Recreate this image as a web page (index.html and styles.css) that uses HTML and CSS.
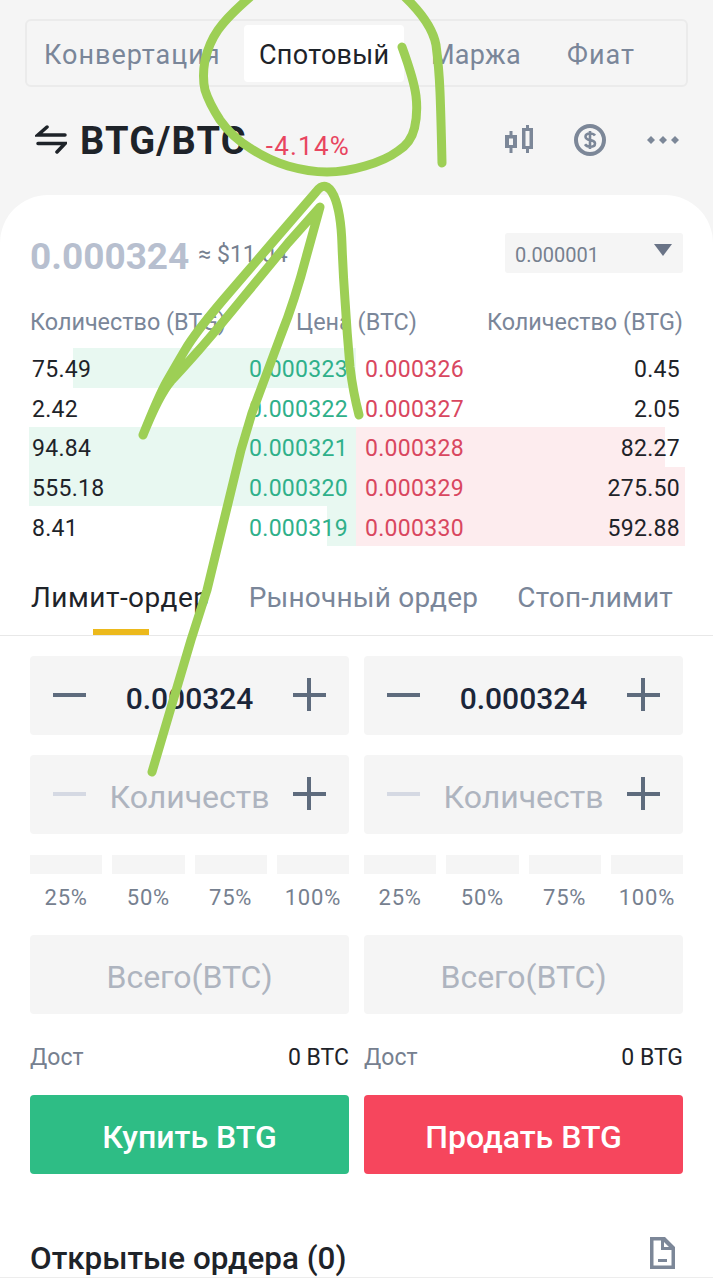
FILE: index.html

```html
<!DOCTYPE html>
<html lang="ru">
<head>
<meta charset="UTF-8" />
<meta name="viewport" content="width=device-width, initial-scale=1" />
<title>BTG/BTC</title>
<link rel="stylesheet" href="styles.css">
</head>
<body>
  <main class="screen">
    <header class="top">
      <nav class="modes">
        <span class="mode convert">Конвертация</span>
        <span class="mode active">Спотовый</span>
        <span class="mode margin">Маржа</span>
        <span class="mode fiat-mode">Фиат</span>
      </nav>
      <div class="ticker">
        <svg class="swap" width="32" height="32" viewBox="0 0 32 32" fill="none" stroke="#1e2329" stroke-width="3.500" stroke-linecap="round">
          <path d="M30 11H3l9-8" />
          <path d="M3 19.500h27l-8 8.500" />
        </svg>
        <span class="pair">BTG/BTC</span>
        <span class="change">-4.14%</span>
        <div class="ticker-icons">
          <svg class="candles" width="30" height="30" viewBox="0 0 30 30" fill="#7c8798">
            <path fill-rule="evenodd" d="M4.500 6h3v4H12v13H7.500v5h-3v-5H0V10h4.500zM4 13.500V20h4v-6.500z" />
            <path fill-rule="evenodd" d="M21 0h3v3h4v21h-4v4h-3v-4h-4V3h4zM20.500 6v15h4V6z" />
          </svg>
          <svg width="32" height="32" viewBox="0 0 32 32" fill="none" stroke="#7c8798">
            <circle cx="16" cy="16" r="14" stroke-width="4" />
            <path d="M21 11.500c-1-1.500-3-2-5-2-2.500 0-4.500 1.200-4.500 3.300 0 4.700 9.500 2 9.500 6.600 0 2.200-2.200 3.300-5 3.300-2.200 0-4-.8-5-2.400M16 7v18" stroke-width="2.600" />
          </svg>
          <svg width="34" height="10" viewBox="0 0 34 10" fill="#7c8798">
            <path d="M5 1l4 4-4 4-4-4zM17 1l4 4-4 4-4-4zM29 1l4 4-4 4-4-4z" />
          </svg>
        </div>
      </div>
    </header>

    <section class="sheet">
      <div class="price-row">
        <span class="last-price">0.000324</span>
        <span class="fiat">≈ $11.04</span>
        <div class="step-select">
          <span>0.000001</span>
          <i class="caret"></i>
        </div>
      </div>

      <div class="book-head">
        <span>Количество (BTG)</span>
        <span>Цена (BTC)</span>
        <span>Количество (BTG)</span>
      </div>
      <div class="book">
        <div class="bid" style="background-size:86.500% 100%"><span>75.49</span><span class="up">0.000323</span></div>
        <div class="ask"><span class="down">0.000326</span><span>0.45</span></div>
        <div class="bid"><span>2.42</span><span class="up">0.000322</span></div>
        <div class="ask"><span class="down">0.000327</span><span>2.05</span></div>
        <div class="bid" style="background-size:100% 100%"><span>94.84</span><span class="up">0.000321</span></div>
        <div class="ask" style="background-size:94% 100%"><span class="down">0.000328</span><span>82.27</span></div>
        <div class="bid" style="background-size:100% 100%"><span>555.18</span><span class="up">0.000320</span></div>
        <div class="ask" style="background-size:100% 100%"><span class="down">0.000329</span><span>275.50</span></div>
        <div class="bid" style="background-size:9% 100%"><span>8.41</span><span class="up">0.000319</span></div>
        <div class="ask" style="background-size:100% 100%"><span class="down">0.000330</span><span>592.88</span></div>
      </div>

      <div class="order-tabs">
        <span class="order-tab current">Лимит-ордер</span>
        <span class="order-tab">Рыночный ордер</span>
        <span class="order-tab">Стоп-лимит</span>
      </div>

      <div class="forms">
        <form class="trade">
          <div class="stepper"><i class="minus"></i><b class="value">0.000324</b><i class="plus"></i></div>
          <div class="stepper"><i class="minus faded"></i><span class="hint">Количеств</span><i class="plus"></i></div>
          <div class="percents">
            <div class="pct"><i></i><span>25%</span></div>
            <div class="pct"><i></i><span>50%</span></div>
            <div class="pct"><i></i><span>75%</span></div>
            <div class="pct"><i></i><span>100%</span></div>
          </div>
          <div class="total">Всего(BTC)</div>
          <div class="avail"><span class="avail-label">Дост</span><span>0 BTC</span></div>
          <button type="button" class="action buy"><span>Купить BTG</span></button>
        </form>
        <form class="trade">
          <div class="stepper"><i class="minus"></i><b class="value">0.000324</b><i class="plus"></i></div>
          <div class="stepper"><i class="minus faded"></i><span class="hint">Количеств</span><i class="plus"></i></div>
          <div class="percents">
            <div class="pct"><i></i><span>25%</span></div>
            <div class="pct"><i></i><span>50%</span></div>
            <div class="pct"><i></i><span>75%</span></div>
            <div class="pct"><i></i><span>100%</span></div>
          </div>
          <div class="total">Всего(BTC)</div>
          <div class="avail"><span class="avail-label">Дост</span><span>0 BTG</span></div>
          <button type="button" class="action sell"><span>Продать BTG</span></button>
        </form>
      </div>

      <div class="open-orders">
        <h2>Открытые ордера (0)</h2>
        <svg width="25" height="32" viewBox="0 0 25 32" fill="#7c8798">
          <path fill-rule="evenodd" d="M0 0h15l10 10v22H0zM3.500 3.500v25h18V13H11V3.500zM14 5v5h5zM8 22h9v3H8z" />
        </svg>
      </div>
    </section>

    <!-- пометка от руки поверх скриншота -->
    <svg class="scribble" width="713" height="1280" viewBox="0 0 713 1280" fill="none" stroke="#9dcf55" stroke-width="9" stroke-linecap="round" stroke-linejoin="round">
      <path d="M402 47Q414 80 416 96Q418 113 414.500 128Q411 143 398 151Q386 160 365 166Q345 172 327 172Q309 172 288 166Q268 160 250 148Q232 137 220 120Q209 103 205 90Q202 77 205 60Q209 43 218 30Q227 17 250 -3" />
      <path d="M405 -3Q432 23 436 45Q439 67 440 92Q441 117 442 163" />
      <path d="M152 772L191 640L207 590L241 450L252 413Q268 370 281 335Q295 300 307 254L320 207L288 243L241 300Q214 333 199 350Q184 367 171 381Q159 395 143 435Q159 395 167 381Q175 367 185 350Q195 333 223 300L272 243L316 192Q326 179 334 196Q341 212 342 245Q343 272 345 300Q347 333 350 367Q353 392 359 415" />
    </svg>
  </main>
</body>
</html>
```

FILE: styles.css

```css
* {
  box-sizing: border-box;
}
body {
  margin: 0;
  background: #f5f5f5;
  color: #1e2329;
  font-family: Roboto, "Noto Sans", sans-serif;
}
.screen {
  position: relative;
  width: 713px;
  height: 1280px;
  overflow: hidden;
}
.top {
  height: 195px;
  padding: 19px 25px 0;
}
.modes {
  display: flex;
  align-items: center;
  height: 68px;
  padding: 0 2px;
  border: 2px solid #ebebeb;
  border-radius: 6px;
  font-size: 27px;
  letter-spacing: 0.300px;
  color: #7a8699;
}
.mode {
  padding: 3px 15px 0;
  line-height: 54px;
  border-radius: 4px;
}
.mode.convert {
  width: 215px;
  letter-spacing: 1px;
  white-space: nowrap;
}
.mode.active {
  width: 160px;
  background: #fff;
  color: #1e2329;
  text-align: center;
}
.mode.margin {
  margin-left: 12px;
}
.mode.fiat-mode {
  margin-left: 16px;
  letter-spacing: 1px;
}
.ticker {
  display: flex;
  align-items: center;
  height: 66px;
  margin-top: 20px;
  padding-left: 10px;
}
.swap {
  flex: none;
}
.pair {
  margin: 1px 0 0 13px;
  font-size: 38px;
  font-weight: 700;
  letter-spacing: 1.200px;
}
.change {
  margin: 12px 0 0 19px;
  font-size: 26px;
  letter-spacing: 1.200px;
  color: #e8455f;
}
.ticker-icons {
  display: flex;
  align-items: center;
  gap: 40px;
  margin-left: auto;
  padding-right: 8px;
}
.candles {
  margin-right: -1px;
}
.sheet {
  height: 1085px;
  padding-top: 38px;
  background: #fff;
  border-radius: 48px 48px 0 0;
}
.price-row {
  display: flex;
  align-items: center;
  height: 40px;
  padding: 0 30px;
}
.last-price {
  padding-top: 6px;
  font-size: 37px;
  font-weight: 700;
  color: #b7bfcf;
}
.fiat {
  margin-left: 9px;
  padding-top: 3px;
  font-size: 23px;
  color: #76808f;
}
.step-select {
  display: flex;
  align-items: center;
  justify-content: space-between;
  width: 178px;
  height: 40px;
  margin-left: auto;
  padding: 0 11px 0 10px;
  background: #f5f5f5;
  border-radius: 3px;
  font-size: 20px;
  color: #76808f;
}
.step-select span {
  padding-top: 3px;
}
.caret {
  margin-bottom: 6px;
  border-top: 12px solid #6a7487;
  border-left: 9px solid transparent;
  border-right: 9px solid transparent;
}
.book-head {
  display: flex;
  justify-content: space-between;
  margin-top: 34px;
  padding: 0 30px;
  font-size: 23.400px;
  line-height: 30px;
  color: #7a8699;
}
.book {
  display: grid;
  grid-template-columns: 327px 329px;
  grid-auto-rows: 39.600px;
  margin: 11px 0 0 29px;
  font-size: 23px;
  letter-spacing: 0.300px;
  color: #1e2329;
}
.bid, .ask {
  display: flex;
  align-items: center;
  justify-content: space-between;
  padding-top: 4px;
  background-repeat: no-repeat;
  background-size: 0 100%;
}
.bid {
  padding-left: 3px;
  padding-right: 8px;
  background-image: linear-gradient(#e8f8f1, #e8f8f1);
  background-position: right top;
}
.ask {
  padding-left: 9px;
  padding-right: 5px;
  background-image: linear-gradient(#fdecee, #fdecee);
  background-position: left top;
}
.up {
  color: #2fb08a;
}
.down {
  color: #d9475f;
}
.order-tabs {
  display: flex;
  justify-content: space-between;
  height: 90px;
  padding: 34px 40px 0 31px;
  border-bottom: 1px solid #e8e8e8;
  font-size: 28px;
  letter-spacing: 0.200px;
  color: #7a8699;
}
.order-tab {
  position: relative;
  line-height: 36px;
}
.order-tab.current {
  letter-spacing: 0.500px;
  color: #1e2329;
}
.order-tab.current::after {
  content: "";
  position: absolute;
  left: 62px;
  bottom: 0;
  width: 56px;
  height: 6px;
  background: #ecb91c;
}
.forms {
  display: grid;
  grid-template-columns: 319px 319px;
  gap: 15px;
  padding: 20px 0 0 30px;
}
.trade {
  display: flex;
  flex-direction: column;
}
.stepper {
  display: flex;
  align-items: center;
  justify-content: space-between;
  height: 79px;
  margin-bottom: 20px;
  padding: 0 23px;
  background: #f5f5f5;
  border-radius: 4px;
  font-size: 30px;
}
.minus, .plus {
  position: relative;
  flex: none;
  width: 33px;
  height: 4px;
  background: #5e6b7d;
}
.minus.faded {
  background: #d5d9e3;
}
.plus::after {
  content: "";
  position: absolute;
  left: 14.500px;
  top: -15px;
  width: 4px;
  height: 33px;
  background: #5e6b7d;
}
.value {
  padding-top: 6px;
  font-weight: 500;
  color: #1b2639;
}
.hint, .total {
  color: #aeb4bf;
}
.hint {
  padding-top: 6px;
  font-size: 32px;
}
.percents {
  display: grid;
  grid-template-columns: repeat(4, 1fr);
  gap: 10px;
  margin-top: 1px;
}
.pct {
  display: flex;
  flex-direction: column;
  align-items: center;
  font-size: 22px;
  letter-spacing: 0.800px;
  color: #76808f;
}
.pct i {
  width: 100%;
  height: 19px;
  background: #f5f5f5;
}
.pct span {
  margin-top: 9px;
  line-height: 30px;
}
.total {
  display: flex;
  align-items: center;
  justify-content: center;
  height: 79px;
  margin-top: 22px;
  padding-top: 5px;
  background: #f5f5f5;
  border-radius: 4px;
  font-size: 32px;
}
.avail {
  display: flex;
  justify-content: space-between;
  margin-top: 29px;
  font-size: 23px;
  line-height: 30px;
}
.avail-label {
  color: #76808f;
}
.action {
  height: 79px;
  margin-top: 22px;
  border: none;
  border-radius: 4px;
  color: #fff;
  font-family: inherit;
  font-size: 32px;
  font-weight: 500;
}
.action span {
  display: block;
  padding-top: 5px;
}
.buy {
  background: #2ebd85;
}
.sell {
  background: #f6465d;
}
.open-orders {
  display: flex;
  align-items: center;
  justify-content: space-between;
  height: 39px;
  margin-top: 65px;
  padding: 0 38px 0 30px;
  border-bottom: 1px solid #ededed;
}
.open-orders h2 {
  margin: 2px 0 0;
  font-size: 31.400px;
  font-weight: 500;
  white-space: nowrap;
}
.open-orders svg {
  margin-top: -10px;
}
.scribble {
  position: absolute;
  left: 0;
  top: 0;
  pointer-events: none;
}
```
